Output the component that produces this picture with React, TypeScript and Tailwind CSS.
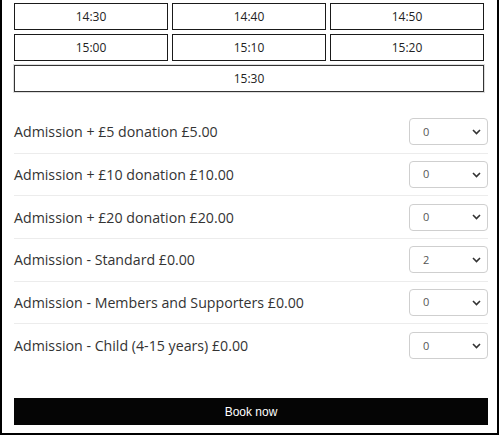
const times = ["14:30", "14:40", "14:50", "15:00", "15:10", "15:20"];

const tickets = [
  { label: "Admission + £5 donation £5.00", qty: "0" },
  { label: "Admission + £10 donation £10.00", qty: "0" },
  { label: "Admission + £20 donation £20.00", qty: "0" },
  { label: "Admission - Standard £0.00", qty: "2" },
  { label: "Admission - Members and Supporters £0.00", qty: "0" },
  { label: "Admission - Child (4-15 years) £0.00", qty: "0" },
];

function QtySelect({ value }: { value: string }) {
  return (
    <div className="w-[79px] h-[27px] border border-[#cfcfcf] rounded-[4px] bg-white flex items-center pl-[13px] pr-[5px] shrink-0">
      <span className="flex-1 text-[11px] text-[#555] font-['Open_Sans',sans-serif]">{value}</span>
      <svg width="9" height="6" viewBox="0 0 9 6" className="mr-[1px]">
        <path d="M1 1l3.5 3.5L8 1" fill="none" stroke="#333" strokeWidth="1.6" />
      </svg>
    </div>
  );
}

export default function App() {
  return (
    <div className="w-[499px] h-[435px] bg-white border-l-2 border-r-2 border-b-2 border-black pl-[12px] pr-[9px] pt-[3px] pb-[8px] font-['Open_Sans',sans-serif]">
      {/* Time slots */}
      <div className="grid grid-cols-3 gap-[4px] mr-[4px]">
        {times.map((t) => (
          <button
            key={t}
            className="h-[27px] border border-[#1a1a1a] bg-white text-[12px] text-[#222] flex items-center justify-center"
          >
            {t}
          </button>
        ))}
        <button className="col-span-3 h-[27px] border border-[#333] bg-white text-[12px] text-[#222] flex items-center justify-center shadow-[0_0_0_1px_#ddd]">
          15:30
        </button>
      </div>

      {/* Tickets */}
      <div className="mt-[19px]">
        {tickets.map((tk, i) => (
          <div
            key={tk.label}
            className={`flex items-center h-[42.7px] ${i < tickets.length - 1 ? "border-b border-[#ececec]" : ""}`}
          >
            <span className="flex-1 text-[14.2px] text-[#333]">{tk.label}</span>
            <QtySelect value={tk.qty} />
          </div>
        ))}
      </div>

      <button className="mt-[31px] w-full h-[27px] bg-[#050505] text-white text-[12px] font-['Liberation_Sans',Arial,sans-serif] flex items-center justify-center">
        Book now
      </button>
    </div>
  );
}
